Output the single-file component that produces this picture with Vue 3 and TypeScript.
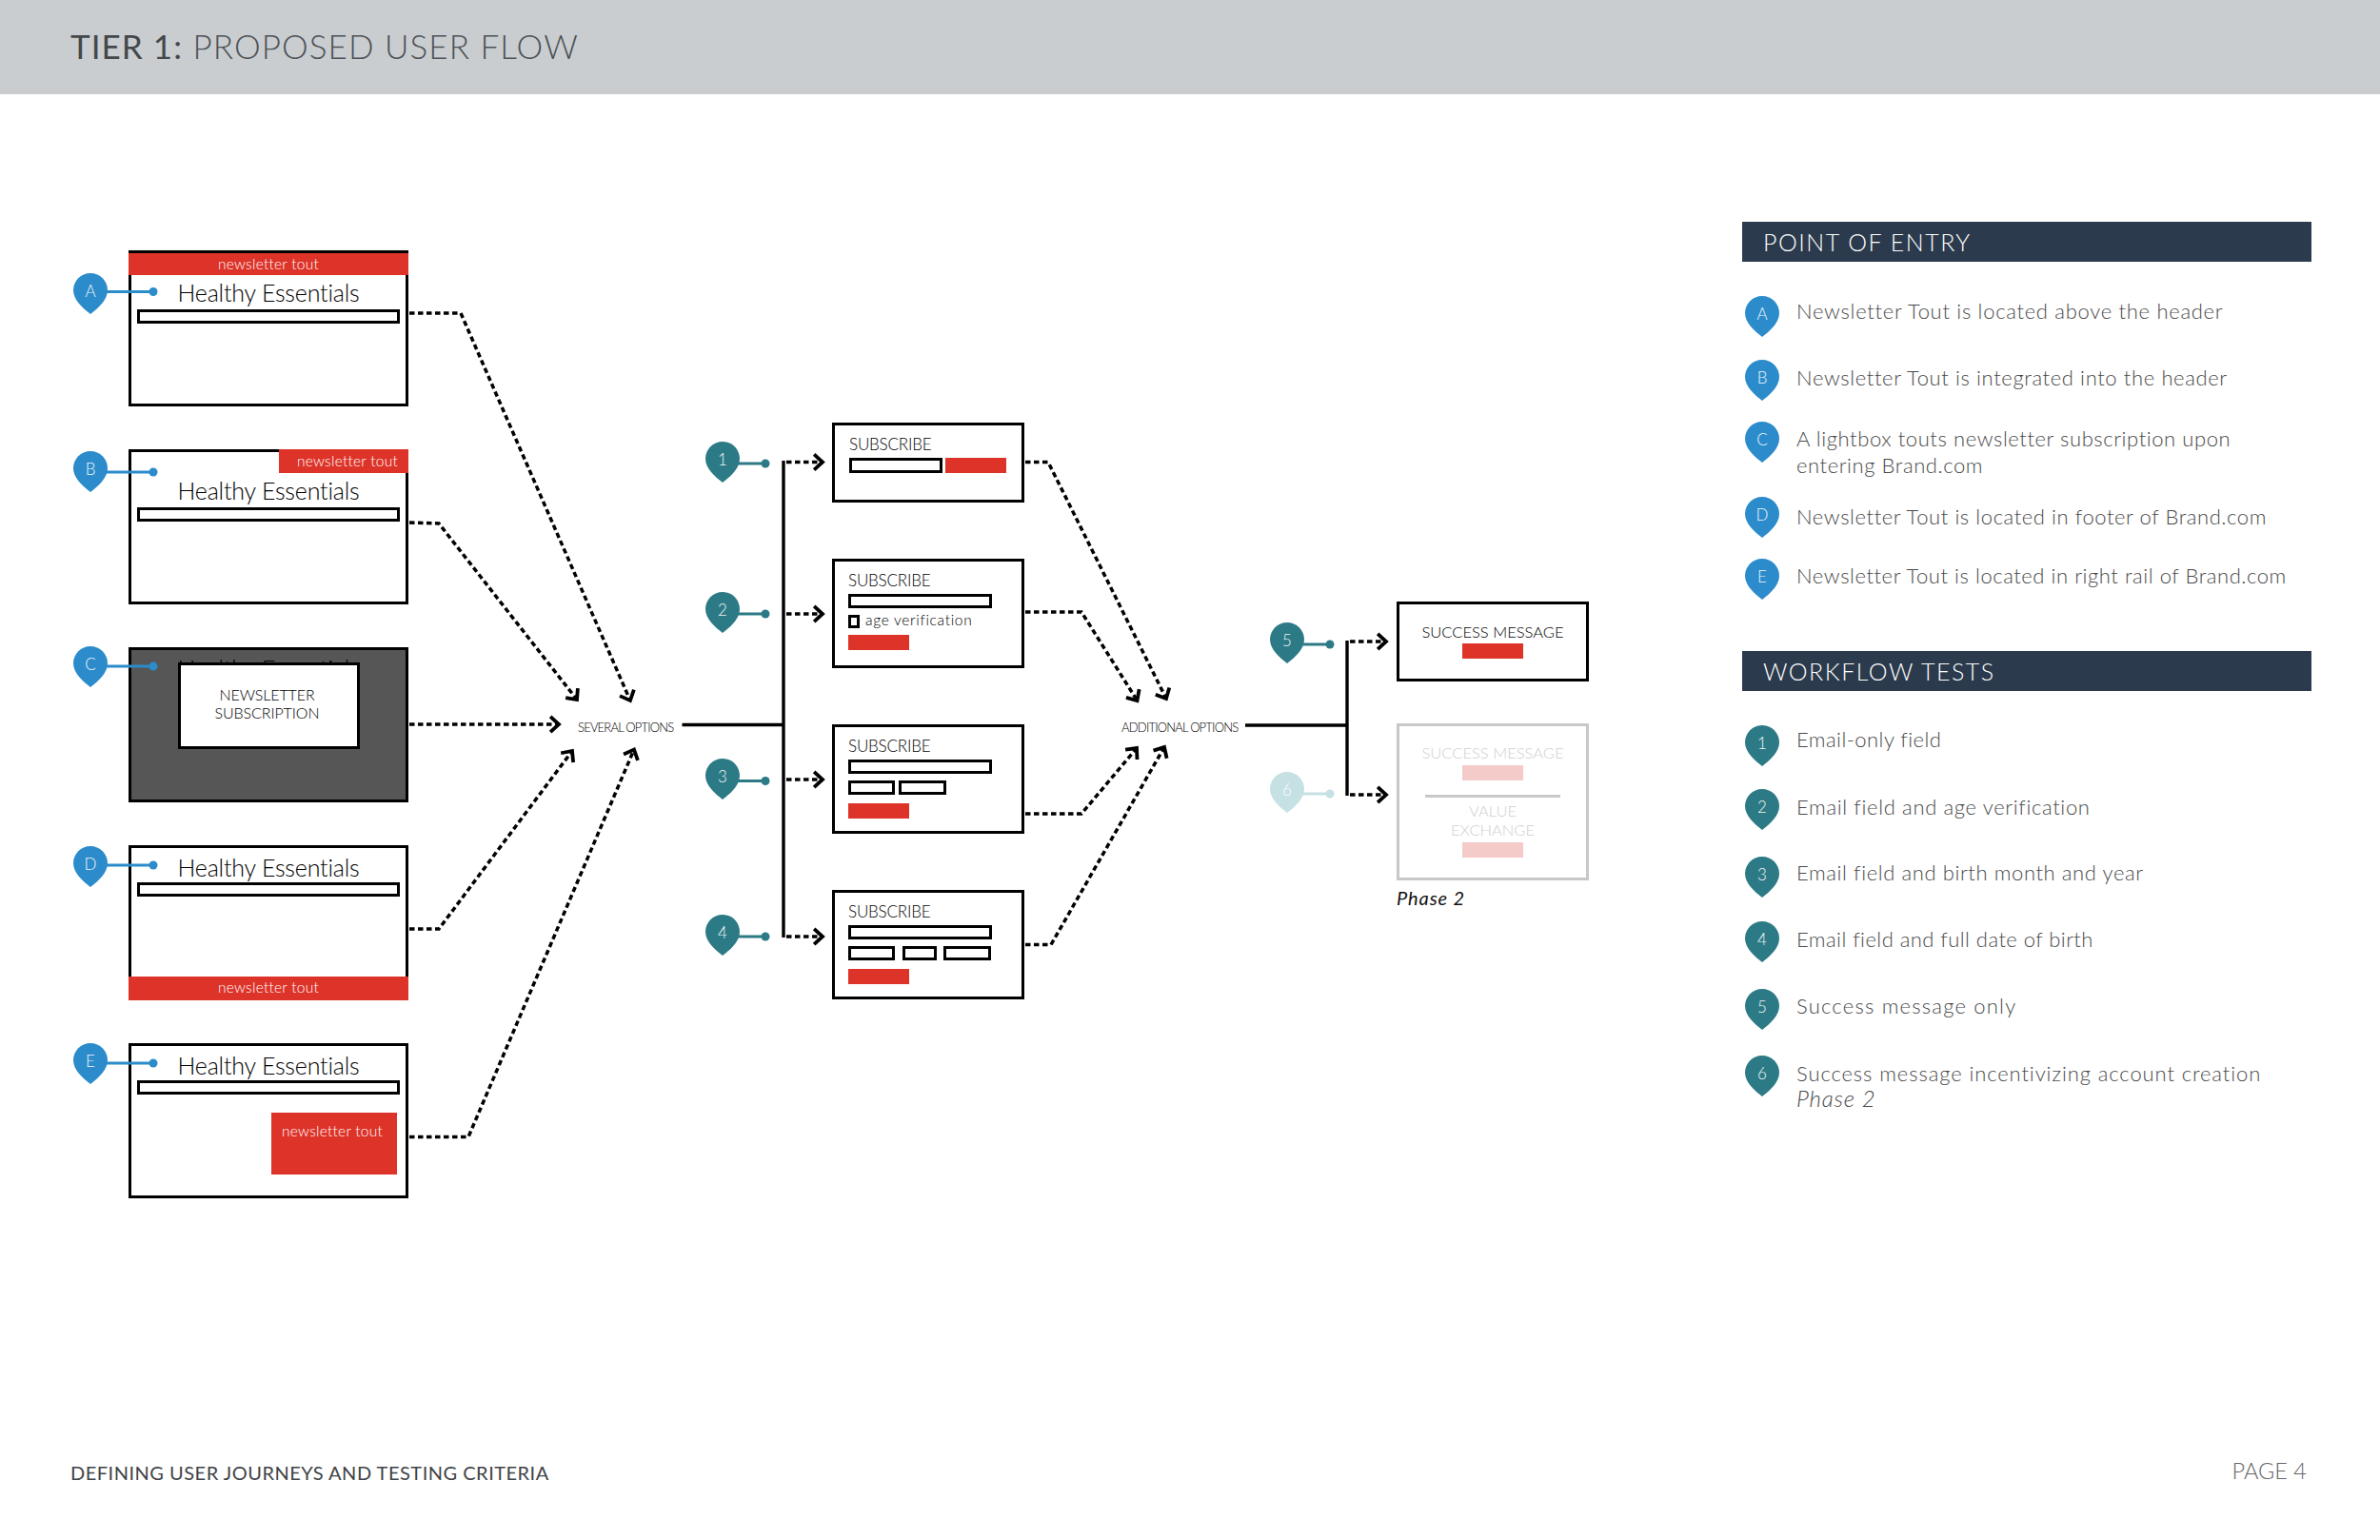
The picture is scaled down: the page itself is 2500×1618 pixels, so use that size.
<script setup lang="ts">
type Pt = [number, number]
const TOP = 99

const at = (x: number, y: number, w?: number, h?: number) => ({
  left: `${x}px`,
  top: `${y - TOP}px`,
  ...(w ? { width: `${w}px` } : {}),
  ...(h ? { height: `${h}px` } : {}),
})

const BLUE = '#2b8bcb'
const TEAL = '#2c7a85'
const PALE = '#c5e1e3'

const pins = [
  { id: 'A', x: 77, y: 287, ly: 306.5, dx: 161, c: BLUE },
  { id: 'B', x: 77, y: 474, ly: 496, dx: 161, c: BLUE },
  { id: 'C', x: 77, y: 679, ly: 700, dx: 161, c: BLUE },
  { id: 'D', x: 77, y: 889, ly: 909, dx: 161, c: BLUE },
  { id: 'E', x: 77, y: 1096, ly: 1117, dx: 161, c: BLUE },
  { id: '1', x: 741, y: 464, ly: 487, dx: 804, c: TEAL },
  { id: '2', x: 741, y: 622, ly: 645, dx: 804, c: TEAL },
  { id: '3', x: 741, y: 797, ly: 820.5, dx: 804, c: TEAL },
  { id: '4', x: 741, y: 961, ly: 984, dx: 804, c: TEAL },
  { id: '5', x: 1334, y: 654, ly: 677, dx: 1397, c: TEAL },
  { id: '6', x: 1334, y: 811, ly: 834, dx: 1397, c: PALE },
]

const flows: Pt[][] = [
  [[430, 329], [484, 329], [662, 736]],
  [[430, 549], [461, 550], [606, 735]],
  [[430, 761], [587, 761]],
  [[430, 976], [461, 976], [601, 789]],
  [[430, 1194.5], [492, 1194.5], [666, 787.5]],
  [[826, 485.5], [864, 485.5]],
  [[826, 645], [864, 645]],
  [[826, 819], [864, 819]],
  [[826, 984], [864, 984]],
  [[1077, 485.5], [1101, 485.5], [1225, 734]],
  [[1077, 643], [1136, 643], [1194.5, 736]],
  [[1077, 855], [1136, 855], [1194, 786]],
  [[1077, 992.5], [1104, 992.5], [1223, 785]],
  [[1418, 674], [1456, 674]],
  [[1418, 835], [1456, 835]],
]

const toPoints = (p: Pt[]) => p.map((q) => q.join(',')).join(' ')

const head = (p: Pt[]) => {
  const [x, y] = p[p.length - 1]
  const [a, b] = p[p.length - 2]
  const t = Math.atan2(y - b, x - a)
  const r = 12
  const s = 0.74
  const l: Pt = [x - r * Math.cos(t - s), y - r * Math.sin(t - s)]
  const m: Pt = [x - r * Math.cos(t + s), y - r * Math.sin(t + s)]
  return toPoints([l, [x, y], m])
}

const trunks = [
  'M716.5 761.5H823',
  'M823 484V985',
  'M1308 762H1415',
  'M1415 673V836',
]

const entryBoxes = [
  { key: 'a', style: at(135, 263, 294, 164) },
  { key: 'b', style: at(135, 472, 294, 163) },
  { key: 'c', style: at(135, 680, 294, 163) },
  { key: 'd', style: at(135, 888, 294, 163) },
  { key: 'e', style: at(135, 1096, 294, 163) },
]

const forms = [
  { key: 'f2', style: at(874, 587, 202, 115), age: true, small: [] as number[], gap: 0 },
  { key: 'f3', style: at(874, 761, 202, 115), age: false, small: [49, 50], gap: 4 },
  { key: 'f4', style: at(874, 935, 202, 115), age: false, small: [49, 36, 50], gap: 7.5 },
]

const sections = [
  {
    title: 'POINT OF ENTRY',
    color: BLUE,
    rows: [
      { id: 'A', text: 'Newsletter Tout is located above the header', h: 67, pad: 2, ls: 0.7 },
      { id: 'B', text: 'Newsletter Tout is integrated into the header', h: 65, pad: 5, ls: 0.62 },
      { id: 'C', text: 'A lightbox touts newsletter subscription upon entering Brand.com', h: 79, pad: 4, ls: 0.58 },
      { id: 'D', text: 'Newsletter Tout is located in footer of Brand.com', h: 65, pad: 7, ls: 0.58 },
      { id: 'E', text: 'Newsletter Tout is located in right rail of Brand.com', h: 43, pad: 4, ls: 0.56 },
    ],
  },
  {
    title: 'WORKFLOW TESTS',
    color: TEAL,
    rows: [
      { id: '1', text: 'Email-only field', h: 67, pad: 1, ls: 0.45 },
      { id: '2', text: 'Email field and age verification', h: 71, pad: 5, ls: 0.65 },
      { id: '3', text: 'Email field and birth month and year', h: 68, pad: 3, ls: 0.6 },
      { id: '4', text: 'Email field and full date of birth', h: 71, pad: 5, ls: 0.45 },
      { id: '5', text: 'Success message only', h: 70, pad: 4, ls: 1.2 },
      { id: '6', text: 'Success message incentivizing account creation', note: 'Phase 2', h: 43, pad: 5, ls: 0.89 },
    ],
  },
]

const PIN_D = 'M18 0C28 0 36 8 36 18C36 28 26 37 18 43C10 37 0 28 0 18C0 8 8 0 18 0Z'
</script>

<template>
  <div class="page">
    <header class="top">
      <h1 class="title"><span class="title-strong">TIER 1:</span> PROPOSED USER FLOW</h1>
    </header>

    <main class="main">
      <section class="canvas">
        <!-- entry wireframes -->
        <div
          v-for="b in entryBoxes"
          :key="b.key"
          class="wire"
          :class="`wire-${b.key}`"
          :style="b.style"
        >
          <div v-if="b.key === 'a'" class="tout strip">newsletter tout</div>
          <div v-if="b.key === 'b'" class="tout strip strip-right">newsletter tout</div>
          <div class="brand">Healthy Essentials</div>
          <div v-if="b.key !== 'c'" class="bar"></div>
          <div v-if="b.key === 'c'" class="modal">NEWSLETTER<br />SUBSCRIPTION</div>
          <div v-if="b.key === 'd'" class="tout strip strip-bottom">newsletter tout</div>
          <div v-if="b.key === 'e'" class="tout rail">newsletter tout</div>
        </div>

        <!-- form wireframes -->
        <div class="form form-one" :style="at(874, 444, 202, 84)">
          <div class="sub-title">SUBSCRIBE</div>
          <div class="inline">
            <div class="field field-one"></div>
            <div class="submit"></div>
          </div>
        </div>
        <div
          v-for="f in forms"
          :key="f.key"
          class="form"
          :class="{ 'form-tall': !f.age }"
          :style="f.style"
        >
          <div class="sub-title">SUBSCRIBE</div>
          <div class="field field-wide"></div>
          <div v-if="f.age" class="check-row">
            <span class="check"></span>
            <span class="check-text">age verification</span>
          </div>
          <div v-else class="inline" :style="{ gap: `${f.gap}px` }">
            <div
              v-for="(w, i) in f.small"
              :key="i"
              class="field"
              :style="{ width: `${w}px` }"
            ></div>
          </div>
          <div class="submit"></div>
        </div>

        <!-- success wireframes -->
        <div class="result result-now" :style="at(1467, 632, 202, 84)">
          <div class="result-text">SUCCESS MESSAGE</div>
          <div class="submit"></div>
        </div>
        <div class="result result-later" :style="at(1467, 760, 202, 165)">
          <div class="result-text">SUCCESS MESSAGE</div>
          <div class="submit"></div>
          <div class="rule"></div>
          <div class="result-text result-value">VALUE<br />EXCHANGE</div>
          <div class="submit"></div>
        </div>
        <div class="phase" :style="at(1467, 931)">Phase 2</div>

        <div class="option" :style="at(607, 755)">SEVERAL OPTIONS</div>
        <div class="option" :style="at(1178, 755)">ADDITIONAL OPTIONS</div>

        <!-- connectors drawn in page coordinates -->
        <svg class="wires" viewBox="0 99 1830 1379" width="1830" height="1379">
          <path v-for="(d, i) in trunks" :key="i" :d="d" class="trunk" />
          <g v-for="(f, i) in flows" :key="i">
            <polyline :points="toPoints(f)" class="dash" />
            <polyline :points="head(f)" class="chev" />
          </g>
          <g v-for="p in pins" :key="p.id">
            <path :d="`M${p.x + 34} ${p.ly}H${p.dx}`" :stroke="p.c" class="lead" />
            <circle :cx="p.dx" :cy="p.ly" r="4.5" :fill="p.c" />
          </g>
        </svg>

        <!-- map pins -->
        <div v-for="p in pins" :key="p.id" class="pin pin-node" :style="at(p.x, p.y)">
          <svg class="pin-shape" viewBox="0 0 36 43" width="36" height="43">
            <path :d="PIN_D" :fill="p.c" />
          </svg>
          <span class="pin-label">{{ p.id }}</span>
        </div>
      </section>

      <aside class="side">
        <section v-for="s in sections" :key="s.title" class="legend">
          <h2 class="legend-title">{{ s.title }}</h2>
          <ul class="legend-list">
            <li
              v-for="r in s.rows"
              :key="r.id"
              class="legend-row"
              :style="{ height: `${r.h}px` }"
            >
              <div class="pin">
                <svg class="pin-shape" viewBox="0 0 36 43" width="36" height="43">
                  <path :d="PIN_D" :fill="s.color" />
                </svg>
                <span class="pin-label">{{ r.id }}</span>
              </div>
              <p
                class="legend-text"
                :style="{ paddingTop: `${r.pad}px`, letterSpacing: `${r.ls}px` }"
              >
                {{ r.text }}
                <em v-if="r.note" class="legend-note">{{ r.note }}</em>
              </p>
            </li>
          </ul>
        </section>
      </aside>
    </main>

    <footer class="foot">
      <span class="foot-left">DEFINING USER JOURNEYS AND TESTING CRITERIA</span>
      <span class="foot-right">PAGE 4</span>
    </footer>
  </div>
</template>

<style scoped>
.page {
  width: 2500px;
  height: 1618px;
  display: flex;
  flex-direction: column;
  background: #fff;
  font-family: Lato, "Open Sans", sans-serif;
  font-weight: 300;
  overflow: hidden;
}
.top {
  height: 99px;
  flex: none;
  box-sizing: border-box;
  display: flex;
  align-items: center;
  padding: 0 0 3px 74px;
  background: #c9cdd0;
}
.title {
  margin: 0;
  font-size: 35px;
  font-weight: 300;
  color: #4d5256;
  letter-spacing: 1.05px;
  line-height: 1;
}
.title-strong {
  font-weight: 400;
  color: #44484b;
}
.main {
  flex: 1;
  display: flex;
  min-height: 0;
}
.canvas {
  position: relative;
  width: 1830px;
  flex: none;
}
.wires {
  position: absolute;
  left: 0;
  top: 0;
  pointer-events: none;
}
.trunk {
  fill: none;
  stroke: #000;
  stroke-width: 3.4;
}
.dash {
  fill: none;
  stroke: #000;
  stroke-width: 3.5;
  stroke-dasharray: 5.5 3.5;
}
.chev {
  fill: none;
  stroke: #000;
  stroke-width: 3.8;
}
.lead {
  fill: none;
  stroke-width: 3;
}
.wire {
  position: absolute;
  box-sizing: border-box;
  border: 3px solid #000;
  display: flex;
  flex-direction: column;
  background: #fff;
}
.wire-c {
  background: #565656;
}
.tout {
  color: #fff;
  background: #dd3329;
  font-size: 15.5px;
  letter-spacing: 0.25px;
  text-align: center;
}
.strip {
  flex: none;
  height: 23px;
  line-height: 23px;
  margin: 0 -3px;
}
.strip-right {
  width: 136px;
  box-sizing: border-box;
  height: 25px;
  line-height: 24px;
  align-self: flex-end;
  margin: -3px -3px 0 0;
  padding-left: 8px;
}
.strip-bottom {
  height: 25px;
  line-height: 22px;
  margin: auto -3px -3px;
}
.rail {
  align-self: flex-end;
  box-sizing: border-box;
  width: 132px;
  height: 65px;
  margin: 19px 9px 0 0;
  padding: 10px 0 0 11px;
  line-height: 18px;
  text-align: left;
}
.brand {
  flex: none;
  height: 36px;
  line-height: 36px;
  text-align: center;
  font-size: 25px;
  letter-spacing: -0.2px;
  color: #000;
}
.wire-c .brand {
  margin-top: 1px;
}
.wire-d .brand,
.wire-e .brand {
  height: 32px;
  line-height: 32px;
  margin-top: 4px;
}
.bar {
  flex: none;
  box-sizing: border-box;
  height: 15px;
  margin: 0 6px;
  border: 3px solid #000;
  background: #fff;
}
.modal {
  position: absolute;
  left: 49px;
  top: 13px;
  box-sizing: border-box;
  width: 191px;
  height: 91px;
  padding: 21px 4px 0 0;
  border: 3px solid #000;
  background: #fff;
  color: #000;
  font-size: 16px;
  line-height: 19px;
  letter-spacing: -0.1px;
  text-align: center;
}
.form {
  position: absolute;
  box-sizing: border-box;
  border: 3px solid #000;
  padding: 10px 0 0 14px;
  display: flex;
  flex-direction: column;
  gap: 7px;
  background: #fff;
}
.form-one {
  padding-left: 15px;
}
.sub-title {
  height: 20px;
  line-height: 20px;
  margin-bottom: -3px;
  font-size: 17px;
  letter-spacing: -0.2px;
  color: #000;
}
.field {
  box-sizing: border-box;
  height: 15px;
  flex: none;
  border: 3px solid #000;
  background: #fff;
}
.field-wide {
  width: 151px;
}
.field-one {
  width: 98px;
  height: 16px;
}
.inline {
  display: flex;
  gap: 3px;
}
.submit {
  flex: none;
  width: 64px;
  height: 16px;
  background: #dd3329;
}
.form-tall .submit {
  margin-top: 2px;
}
.check-row {
  display: flex;
  align-items: center;
  gap: 6px;
  height: 14px;
}
.check {
  box-sizing: border-box;
  width: 12px;
  height: 14px;
  border: 3px solid #000;
}
.check-text {
  margin-bottom: 4px;
  font-size: 15.5px;
  letter-spacing: 0.7px;
  color: #000;
}
.result {
  position: absolute;
  box-sizing: border-box;
  border: 3px solid #000;
  display: flex;
  flex-direction: column;
  align-items: center;
  padding-top: 19px;
  gap: 2px;
  background: #fff;
}
.result-text {
  font-size: 16.5px;
  line-height: 20px;
  color: #000;
  text-align: center;
}
.result-later {
  border-color: #c8c8c8;
  padding-top: 18px;
  gap: 3px;
}
.result-later .result-text {
  color: #cfcfcf;
}
.result-later .submit {
  background: #f4cbc9;
}
.rule {
  width: 142px;
  height: 3px;
  margin-top: 12px;
  background: #c8c8c8;
}
.result-value {
  margin-top: 1px;
}
.phase {
  position: absolute;
  font-size: 20px;
  font-weight: 400;
  line-height: 24px;
  letter-spacing: 0.9px;
  font-style: italic;
  color: #111;
}
.option {
  position: absolute;
  font-size: 13px;
  line-height: 18px;
  letter-spacing: -0.8px;
  white-space: nowrap;
  color: #000;
}
.pin {
  display: grid;
  width: 36px;
  height: 43px;
  flex: none;
}
.pin > * {
  grid-area: 1 / 1;
}
.pin-node {
  position: absolute;
}
.pin-label {
  height: 38px;
  line-height: 38px;
  text-align: center;
  font-size: 17px;
  color: #fff;
  opacity: 0.92;
}
.side {
  box-sizing: border-box;
  width: 598px;
  flex: none;
  padding-top: 134px;
  display: flex;
  flex-direction: column;
  gap: 54px;
}
.legend-title {
  box-sizing: border-box;
  height: 42px;
  margin: 0;
  padding-left: 22px;
  background: #2b3a4c;
  color: #fff;
  font-size: 25px;
  line-height: 43px;
  font-weight: 300;
  letter-spacing: 1.5px;
}
.legend-list {
  list-style: none;
  margin: 36px 0 0;
  padding: 0 0 0 3px;
}
.legend-row {
  display: flex;
  gap: 18px;
}
.legend-text {
  margin: 0;
  max-width: 520px;
  font-size: 22px;
  line-height: 27.5px;
  color: #4a4a4a;
}
.legend-note {
  display: block;
  font-size: 24px;
  line-height: 24px;
  letter-spacing: 0.8px;
}
.foot {
  flex: none;
  height: 140px;
  box-sizing: border-box;
  padding: 55px 77px 0 74px;
  display: flex;
  justify-content: space-between;
  align-items: flex-start;
}
.foot-left {
  font-size: 20px;
  line-height: 28px;
  font-weight: 400;
  color: #3f4346;
  letter-spacing: 0.5px;
}
.foot-right {
  font-size: 23.5px;
  line-height: 24px;
  color: #666;
}
</style>
